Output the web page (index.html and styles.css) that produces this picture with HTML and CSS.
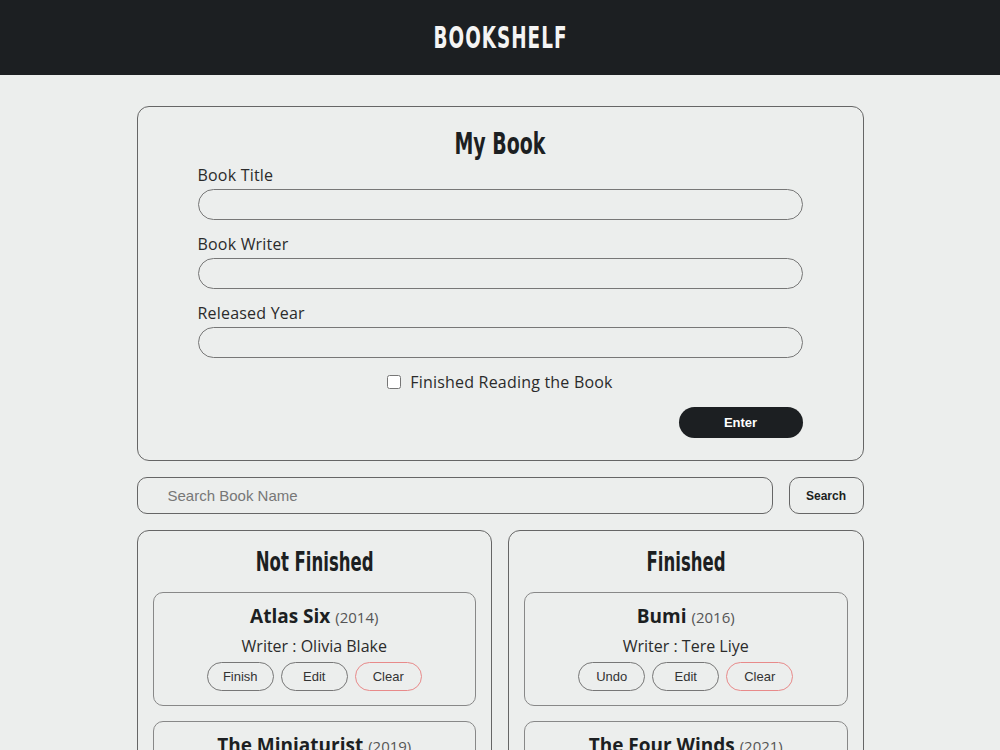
FILE: index.html
```html
<!DOCTYPE html>
<html lang="en">
  <head>
    <meta charset="UTF-8" />
    <meta name="viewport" content="width=device-width, initial-scale=1.0" />
    <title>Bookshelf</title>
    <link rel="stylesheet" href="styles.css">
  </head>
  <body>
    <header class="top-bar">
      <h1><span class="narrow">BOOKSHELF</span></h1>
    </header>

    <main class="container">
      <section class="book-form">
        <h2><span class="narrow">My Book</span></h2>
        <form id="book-form">
          <div class="field">
            <label for="book-title">Book Title</label>
            <input type="text" id="book-title" />
          </div>
          <div class="field">
            <label for="book-writer">Book Writer</label>
            <input type="text" id="book-writer" />
          </div>
          <div class="field">
            <label for="book-year">Released Year</label>
            <input type="number" id="book-year" />
          </div>
          <div class="check">
            <input type="checkbox" id="book-finished" />
            <label for="book-finished">Finished Reading the Book</label>
          </div>
          <div class="submit-row">
            <button type="submit" class="enter-btn">Enter</button>
          </div>
        </form>
      </section>

      <section class="search-row">
        <input type="text" id="search-title" placeholder="Search Book Name" />
        <button class="search-btn">Search</button>
      </section>

      <section class="shelves">
        <div class="shelf">
          <h2><span class="narrow">Not Finished</span></h2>
          <div class="book">
            <h3>Atlas Six <span class="year">(2014)</span></h3>
            <p class="writer">Writer : Olivia Blake</p>
            <div class="actions">
              <button>Finish</button>
              <button>Edit</button>
              <button class="clear">Clear</button>
            </div>
          </div>
          <div class="book">
            <h3>The Miniaturist <span class="year">(2019)</span></h3>
            <p class="writer">Writer : Jessie Burton</p>
            <div class="actions">
              <button>Finish</button>
              <button>Edit</button>
              <button class="clear">Clear</button>
            </div>
          </div>
        </div>
        <div class="shelf">
          <h2><span class="narrow">Finished</span></h2>
          <div class="book">
            <h3>Bumi <span class="year">(2016)</span></h3>
            <p class="writer">Writer : Tere Liye</p>
            <div class="actions">
              <button>Undo</button>
              <button>Edit</button>
              <button class="clear">Clear</button>
            </div>
          </div>
          <div class="book">
            <h3>The Four Winds <span class="year">(2021)</span></h3>
            <p class="writer">Writer : Kristin Hannah</p>
            <div class="actions">
              <button>Undo</button>
              <button>Edit</button>
              <button class="clear">Clear</button>
            </div>
          </div>
        </div>
      </section>
    </main>
  </body>
</html>
```

FILE: styles.css
```css
* {
  box-sizing: border-box;
}

body {
  margin: 0;
  padding: 0;
  font-family: "Open Sans", sans-serif;
  background-color: #eceeed;
  color: #2b2b2b;
}

/* condensed display font is not available, squeeze the bold one */
.narrow {
  display: inline-block;
  transform: scaleX(0.68);
}

.top-bar {
  height: 75px;
  background-color: #1c1f22;
  display: flex;
  align-items: center;
  justify-content: center;
}

.top-bar h1 {
  margin: 0;
  color: #f4f4f4;
  font-family: "DejaVu Sans Condensed", "DejaVu Sans", sans-serif;
  font-weight: bold;
  font-size: 30px;
  letter-spacing: 1.5px;
}

.container {
  width: 727px;
  margin: 31px auto 0;
}

h2 {
  margin: 0;
  text-align: center;
  font-family: "DejaVu Sans Condensed", "DejaVu Sans", sans-serif;
  font-weight: bold;
  color: #1c1f22;
}

.book-form {
  border: 1px solid #666;
  border-radius: 12px;
  padding: 18px 60px 22px;
  height: 355px;
}

.book-form h2 {
  font-size: 31px;
  line-height: 36px;
  margin-bottom: 4px;
}

.field {
  display: flex;
  flex-direction: column;
  margin-bottom: 14px;
}

.field label {
  font-size: 16px;
  line-height: 20px;
  letter-spacing: 0.2px;
  margin-bottom: 4px;
}

.field input {
  height: 31px;
  border: 1px solid #777;
  border-radius: 16px;
  background: transparent;
  padding: 0 14px;
  font-size: 15px;
}

.check {
  display: flex;
  align-items: center;
  justify-content: center;
  gap: 9px;
  font-size: 16px;
  letter-spacing: 0.2px;
  margin-top: -1px;
}

.check input {
  width: 14px;
  height: 14px;
  margin: 0;
}

.submit-row {
  display: flex;
  justify-content: flex-end;
  margin-top: 14px;
}

.enter-btn {
  width: 124px;
  height: 31px;
  border: none;
  border-radius: 16px;
  background-color: #1c1f22;
  color: #fff;
  font-family: "Liberation Sans", Arial, sans-serif;
  font-weight: bold;
  font-size: 13px;
}

.search-row {
  display: flex;
  gap: 16px;
  margin-top: 16px;
}

.search-row input {
  flex: 1;
  height: 37px;
  border: 1px solid #666;
  border-radius: 10px;
  background: transparent;
  padding: 0 30px;
  font-family: "Liberation Sans", Arial, sans-serif;
  font-size: 15px;
}

.search-row input::placeholder {
  color: #777;
}

.search-btn {
  width: 75px;
  height: 37px;
  border: 1px solid #666;
  border-radius: 10px;
  background: transparent;
  font-family: "Liberation Sans", Arial, sans-serif;
  font-weight: bold;
  font-size: 12px;
  color: #1c1f22;
}

.shelves {
  display: grid;
  grid-template-columns: 1fr 1fr;
  gap: 16px;
  margin-top: 16px;
}

.shelf {
  border: 1px solid #666;
  border-radius: 12px;
  padding: 16px 15px;
}

.shelf h2 {
  font-size: 27px;
  line-height: 30px;
  margin-bottom: 15px;
}

.book {
  border: 1px solid #888;
  border-radius: 10px;
  padding: 11px 10px 14px;
  margin-bottom: 15px;
  text-align: center;
}

.book h3 {
  margin: 0;
  font-size: 19px;
  line-height: 24px;
  font-weight: bold;
  color: #1c1f22;
}

.book .year {
  font-size: 15px;
  font-weight: normal;
  color: #555;
}

.writer {
  margin: 6px 0 5px;
  font-size: 16px;
  line-height: 22px;
}

.actions {
  display: flex;
  justify-content: center;
  gap: 7px;
}

.actions button {
  width: 67px;
  height: 29px;
  border: 1px solid #777;
  border-radius: 15px;
  background: transparent;
  font-family: "Liberation Sans", Arial, sans-serif;
  font-size: 13px;
  color: #333;
}

.actions .clear {
  border-color: #e88a8a;
}
```
